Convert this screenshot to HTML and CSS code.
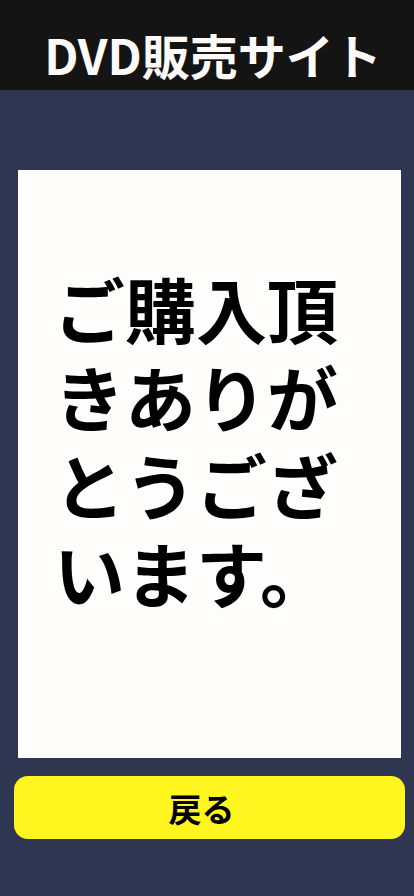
FILE: index.html
```html
<!DOCTYPE html>
<html lang="ja">
<head>
<meta charset="utf-8">
<link rel="stylesheet" href="styles.css">
</head>
<body>
<header class="header"><h1 class="title">DVD販売サイト</h1></header>
<main class="main">
  <section class="card">
    <p class="message">ご購入頂きありがとうございます。</p>
  </section>
  <button class="back">戻る</button>
</main>
</body>
</html>
```
FILE: styles.css
```css
html, body {
  margin: 0;
  padding: 0;
}
body {
  width: 414px;
  height: 896px;
  background: #2f3651;
  font-family: "Noto Sans CJK JP", "Noto Sans", sans-serif;
  overflow: hidden;
}
.header {
  height: 90px;
  box-sizing: border-box;
  padding-top: 18px;
  background: #141414;
  display: flex;
  align-items: center;
  justify-content: center;
}
.title {
  margin: 0;
  color: #fffafa;
  font-size: 48px;
  font-weight: 700;
  line-height: 1;
  padding-left: 12px;
}
.main {
  padding: 80px 9px 0 14px;
  display: flex;
  flex-direction: column;
  align-items: stretch;
}
.card {
  margin: 0 4px;
  height: 588px;
  background: #fffcfc;
  box-sizing: border-box;
  padding: 93px 36px 0 36px;
}
.message {
  margin: 0;
  font-size: 71px;
  font-weight: 700;
  line-height: 88px;
  color: #000;
}
.back {
  margin-top: 18px;
  height: 63px;
  border: none;
  border-radius: 14px;
  background: #fff51f;
  font-family: "Noto Sans CJK JP", sans-serif;
  font-size: 33px;
  font-weight: 700;
  color: #000;
  padding: 0 16px 0 0;
}
```
